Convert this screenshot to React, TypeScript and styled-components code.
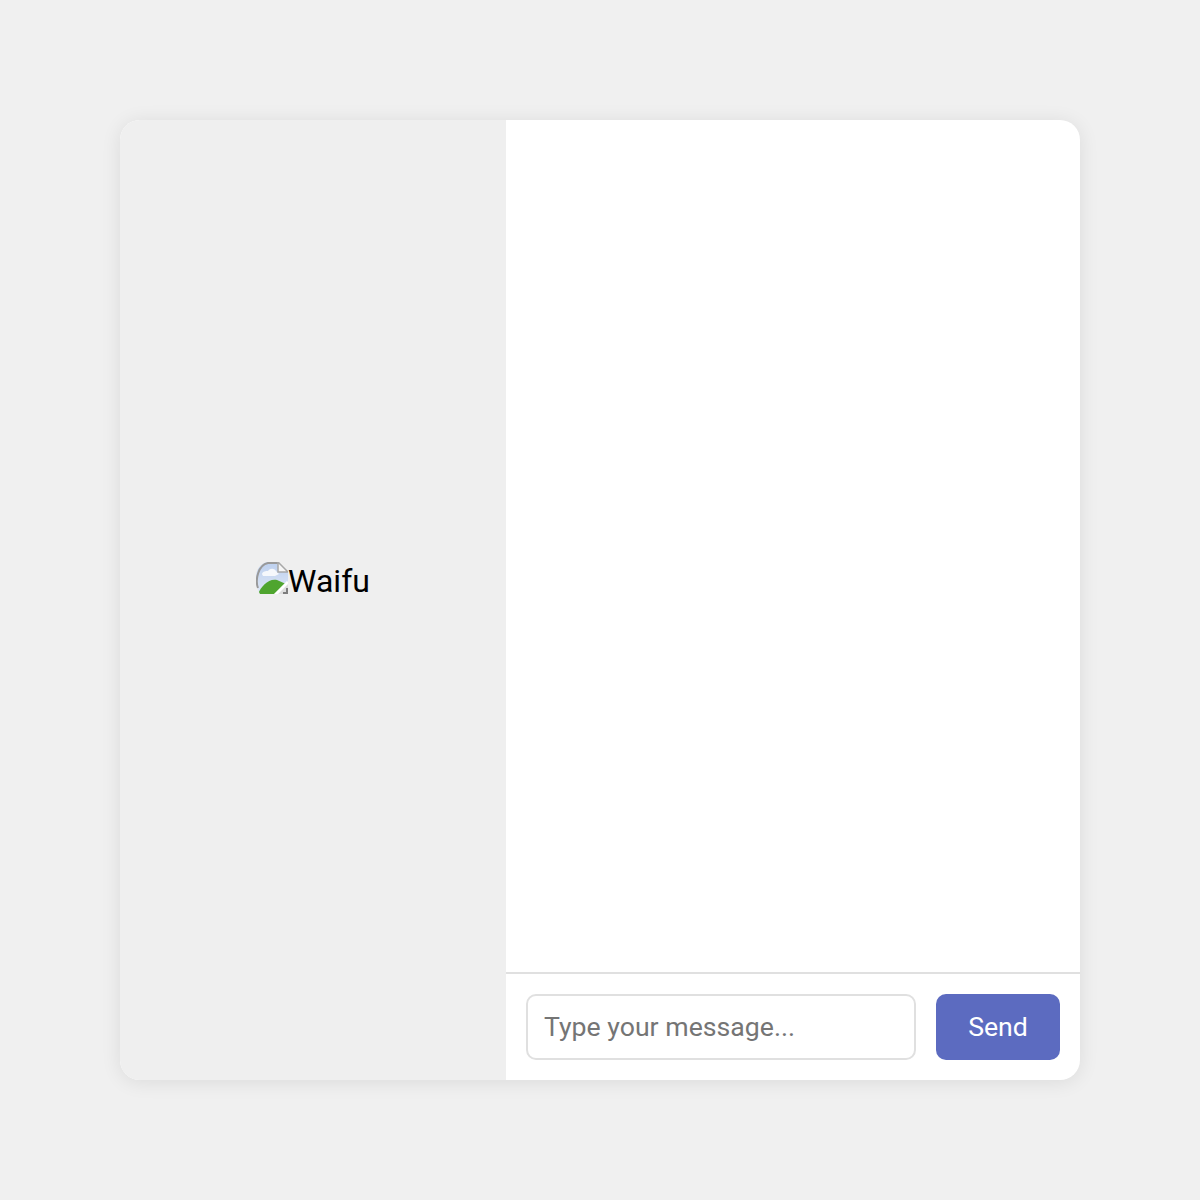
import { createGlobalStyle, styled } from 'styled-components';

const GlobalStyle = createGlobalStyle`
	html, body {
		margin: 0;
		padding: 0;
		background: #f0f0f0;
		font-family: Roboto, "Liberation Sans", sans-serif;
	}
`;

const Page = styled.div`
	display: flex;
	align-items: center;
	justify-content: center;
	height: 1200px;
`;

const Card = styled.main`
	display: flex;
	width: 960px;
	height: 960px;
	border-radius: 20px;
	overflow: hidden;
	background: #fff;
	box-shadow: 0 2px 20px rgba(0, 0, 0, 0.09);
`;

const WaifuPanel = styled.aside`
	display: flex;
	flex: none;
	align-items: center;
	justify-content: center;
	width: 386px;
	padding-bottom: 38px;
	box-sizing: border-box;
	background: #efefef;
`;

const BrokenImage = styled.div`
	color: #000;
	font-size: 32px;
	line-height: 38px;
	white-space: nowrap;

	svg {
		vertical-align: -2px;
		filter: blur(0.7px);
	}
`;

const ChatPanel = styled.section`
	display: flex;
	flex: 1;
	flex-direction: column;
	min-width: 0;
`;

const Messages = styled.div`
	flex: 1;
`;

const Composer = styled.form`
	display: flex;
	gap: 20px;
	padding: 20px;
	border-top: 2px solid #e0e0e0;
`;

const MessageInput = styled.input`
	flex: 1;
	min-width: 0;
	height: 66px;
	box-sizing: border-box;
	padding: 0 16px;
	border: 2px solid #e0e0e0;
	border-radius: 10px;
	outline: none;
	font-family: inherit;
	font-size: 26.67px;
	color: #000;

	&::placeholder {
		color: #757575;
		opacity: 1;
	}
`;

const SendButton = styled.button`
	width: 124px;
	height: 66px;
	border: none;
	border-radius: 10px;
	background: #5c6bc0;
	color: #fff;
	font-family: inherit;
	font-size: 26.67px;
`;

function BrokenImageIcon() {
	return (
		<svg width="32" height="32" viewBox="0 0 32 32" aria-hidden="true">
			<defs>
				<clipPath id="sheet">
					<path d="M12 0h10l10 10v22H4C1 27 0 22 0 16 0 7 5 1 12 0z" />
				</clipPath>
				<linearGradient id="sky" x1="0" y1="0" x2="0" y2="1">
					<stop offset="0" stopColor="#bccfee" />
					<stop offset="1" stopColor="#dfe8f6" />
				</linearGradient>
			</defs>
			<g clipPath="url(#sheet)">
				<rect width="32" height="32" fill="url(#sky)" />
				<path d="M6 12c1-3 4-3 6-3 2-3 6-3 8 0l3 3-4 2H7z" fill="#f6f8fc" />
				<path d="M2 32c3-8 11-16 19-14l9 4-10 10z" fill="#4fa52f" />
				<path d="M20 32l12-12v12z" fill="#dedede" />
				<path d="M19 33l13-13" stroke="#fff" strokeWidth="3" />
			</g>
			<path d="M2 26C-1 18 2 3 12 1h10" fill="none" stroke="#999" strokeWidth="2" />
			<path d="M22 0v10h10z" fill="#f6f6f6" stroke="#a8a8a8" strokeWidth="1.5" />
			<path d="M27 31h4v-5" fill="none" stroke="#7d7d7d" strokeWidth="2" />
		</svg>
	);
}

export default function App() {
	return (
		<>
			<GlobalStyle />
			<Page>
				<Card>
					<WaifuPanel>
						<BrokenImage>
							<BrokenImageIcon />
							Waifu
						</BrokenImage>
					</WaifuPanel>
					<ChatPanel>
						<Messages />
						<Composer onSubmit={(e) => e.preventDefault()}>
							<MessageInput placeholder="Type your message..." />
							<SendButton type="submit">Send</SendButton>
						</Composer>
					</ChatPanel>
				</Card>
			</Page>
		</>
	);
}
